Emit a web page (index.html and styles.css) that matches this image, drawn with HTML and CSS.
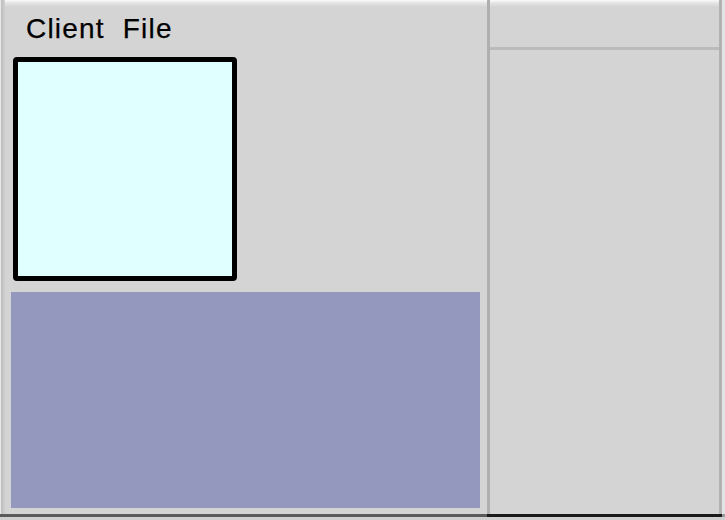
FILE: index.html
```html
<!DOCTYPE html>
<html>
<head>
<meta charset="utf-8">
<link rel="stylesheet" href="styles.css">
</head>
<body>
<div class="screen">
  <div class="main">
    <div class="left">
      <div class="title">Client&nbsp; File</div>
      <div class="canvas-box"></div>
      <div class="purple"></div>
    </div>
    <div class="right">
      <div class="right-top"></div>
      <div class="right-body"></div>
    </div>
    <div class="right-edge"></div>
  </div>
  <div class="bottom-line"></div>
  <div class="bottom-rest"></div>
</div>
</body>
</html>
```
FILE: styles.css
```css
html, body {
  margin: 0;
  padding: 0;
  overflow: hidden;
}
body {
  width: 725px;
  height: 520px;
  background: #d4d4d4;
  font-family: "Liberation Sans", Arial, sans-serif;
}
.screen {
  width: 725px;
  height: 520px;
  display: flex;
  flex-direction: column;
  background: linear-gradient(to bottom, #fbfbfb 0, #e4e4e4 3px, #d4d4d4 7px);
}
.main {
  display: flex;
  height: 514px;
}
.left {
  width: 487px;
  box-sizing: border-box;
  display: flex;
  flex-direction: column;
  box-shadow: inset 1px 0 0 #e8e8e8, inset 3px 0 0 #c2c2c2, inset 5px 0 0 #cccccc;
}
.title {
  margin: 12px 0 0 26px;
  font-size: 28px;
  line-height: 34px;
  letter-spacing: 1.2px;
  color: #000;
  white-space: nowrap;
  -webkit-text-stroke: 0.25px #000;
}
.canvas-box {
  margin: 11px 0 0 13px;
  width: 224px;
  height: 224px;
  box-sizing: border-box;
  border: 5px solid #000;
  border-radius: 4px;
  background: #e0ffff;
}
.purple {
  margin: 11px 0 0 11px;
  width: 469px;
  height: 216px;
  background: #9598be;
}
.right {
  width: 235px;
  box-sizing: border-box;
  border-left: 3px solid #afafaf;
  border-right: 3px solid #b2b2b2;
  display: flex;
  flex-direction: column;
}
.right-top {
  height: 47px;
  border-bottom: 3px solid #bababa;
}
.right-body {
  flex: 1;
}
.right-edge {
  width: 3px;
  background: #e4e4e4;
}
.bottom-line {
  height: 3px;
  background: linear-gradient(to right, #5a5a5a 0, #5a5a5a 487px, #1a1a1a 487px, #1a1a1a 722px, #9a9a9a 722px);
}
.bottom-rest {
  height: 3px;
  background: #cfcfcf;
}
```
